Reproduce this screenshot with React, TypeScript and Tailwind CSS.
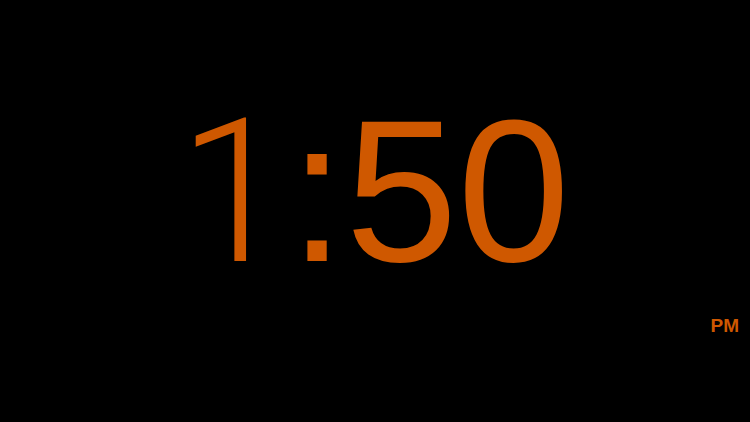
export default function App() {
  return (
    <div className="flex h-[422px] w-[750px] flex-col bg-black font-['Liberation_Sans',Arial,sans-serif] text-[#cf5800]">
      <div className="flex justify-center pt-[90px] pr-[2px]">
        <span className="text-[202px] leading-none">
          <span className="font-['Roboto',sans-serif] text-[200px] font-[360]">1</span>:50
        </span>
      </div>
      <div className="flex justify-end pt-[23px] pr-[11px]">
        <span className="text-[19px] font-bold leading-none">PM</span>
      </div>
    </div>
  );
}
